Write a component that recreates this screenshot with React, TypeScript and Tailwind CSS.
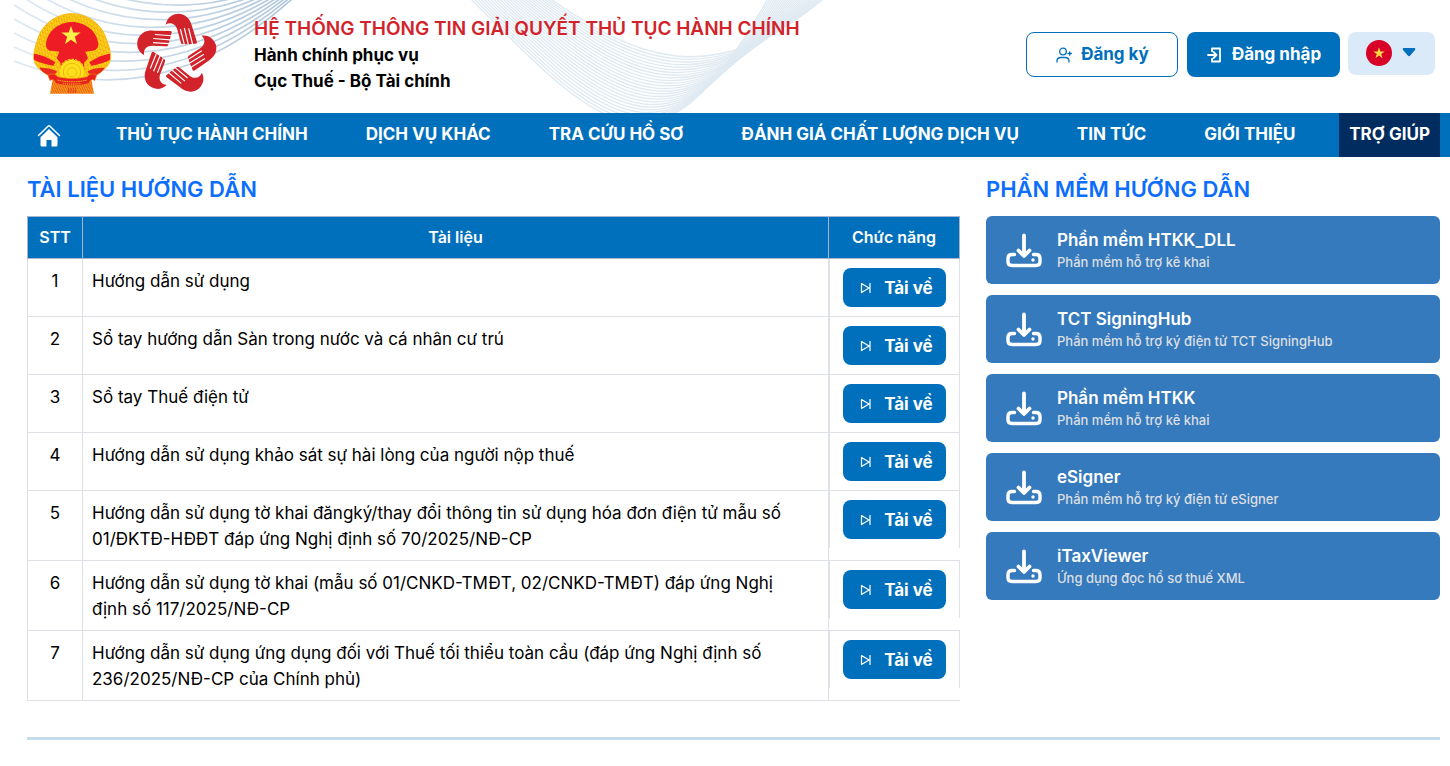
const navLinks = [
  "THỦ TỤC HÀNH CHÍNH",
  "DỊCH VỤ KHÁC",
  "TRA CỨU HỒ SƠ",
  "ĐÁNH GIÁ CHẤT LƯỢNG DỊCH VỤ",
  "TIN TỨC",
  "GIỚI THIỆU",
];

const documents = [
  "Hướng dẫn sử dụng",
  "Sổ tay hướng dẫn Sàn trong nước và cá nhân cư trú",
  "Sổ tay Thuế điện tử",
  "Hướng dẫn sử dụng khảo sát sự hài lòng của người nộp thuế",
  "Hướng dẫn sử dụng tờ khai đăngký/thay đổi thông tin sử dụng hóa đơn điện tử mẫu số 01/ĐKTĐ-HĐĐT đáp ứng Nghị định số 70/2025/NĐ-CP",
  "Hướng dẫn sử dụng tờ khai (mẫu số 01/CNKD-TMĐT, 02/CNKD-TMĐT) đáp ứng Nghị định số 117/2025/NĐ-CP",
  "Hướng dẫn sử dụng ứng dụng đối với Thuế tối thiểu toàn cầu (đáp ứng Nghị định số 236/2025/NĐ-CP của Chính phủ)",
];

const software = [
  { name: "Phần mềm HTKK_DLL", desc: "Phần mềm hỗ trợ kê khai" },
  { name: "TCT SigningHub", desc: "Phần mềm hỗ trợ ký điện tử TCT SigningHub" },
  { name: "Phần mềm HTKK", desc: "Phần mềm hỗ trợ kê khai" },
  { name: "eSigner", desc: "Phần mềm hỗ trợ ký điện tử eSigner" },
  { name: "iTaxViewer", desc: "Ứng dụng đọc hồ sơ thuế XML" },
];

// Left family of curves: fans out to the left, tightens towards the top right.
const leftWaves = Array.from(
  { length: 16 },
  (_, i) =>
    `M14 ${61 - 14 * i}C90 ${91 - 9 * i} 190 ${97 - 8 * i} ${304 - 2 * i} ${-12 - i}`
);

// Middle family: blends from the outer, deep curve to the inner, shallow one.
const middleWaves = Array.from({ length: 26 }, (_, i) => {
  const t = i / 25;
  const mix = (a: number, b: number) => (a + (b - a) * t).toFixed(1);
  return `M${mix(467, 545)} -5C${mix(610, 630)} ${mix(140, 55)} ${mix(660, 710)} ${mix(190, 97)} ${mix(770, 828)} -5`;
});

function HeaderWaves() {
  return (
    <svg width="860" height="113" viewBox="0 0 860 113" fill="none" className="absolute left-0 top-0" aria-hidden="true">
      <defs>
        <linearGradient id="waveFade" gradientUnits="userSpaceOnUse" x1="14" y1="0" x2="290" y2="0">
          <stop offset="0" stopColor="#dfe9f2" />
          <stop offset="1" stopColor="#b0c7dc" />
        </linearGradient>
      </defs>
      <g stroke="url(#waveFade)" strokeWidth="1.7">
        {leftWaves.map((d) => (
          <path key={d} d={d} />
        ))}
      </g>
      <g stroke="#cbdcea" strokeWidth="1.3" opacity="0.6">
        {middleWaves.map((d) => (
          <path key={d} d={d} />
        ))}
      </g>
    </svg>
  );
}

function Emblem() {
  return (
    <svg width="80" height="82" viewBox="36 10 240 246" role="img" aria-label="Quốc huy Việt Nam">
      <defs>
        <pattern id="grain" width="11" height="12" patternUnits="userSpaceOnUse" patternTransform="rotate(28)">
          <rect width="11" height="12" fill="#fbd414" />
          <path d="M1 2l4 3M7 7l3 3" stroke="#e86a16" strokeWidth="2.4" />
          <circle cx="8" cy="2" r="1.3" fill="#ee3a1c" />
        </pattern>
        <pattern id="tail" width="9" height="9" patternUnits="userSpaceOnUse" patternTransform="rotate(20)">
          <rect width="9" height="9" fill="#f59a17" />
          <path d="M0 0l9 9" stroke="#e93c1c" strokeWidth="2.5" />
        </pattern>
      </defs>
      <path d="M98 208L90 252L222 252L214 208Z" fill="url(#tail)" />
      <path d="M156 12C108 12 66 45 54 86C49 102 46 108 42 130C38 150 45 170 66 184L112 218H202L246 184C270 168 276 146 270 126C268 108 262 100 258 86C246 45 204 12 156 12Z" fill="url(#grain)" stroke="#f5bd16" strokeWidth="3" />
      <path d="M156 37C116 37 80 66 78 105C78 116 86 126 98 123L118 126L110 146L122 160L120 188H194L192 160L204 146L196 126L216 123C228 124 235 114 235 104C232 65 196 37 156 37Z" fill="#ee1c24" />
      <path d="M42 132C66 136 82 142 106 158L100 168C80 164 56 158 42 150ZM270 132C246 136 232 142 208 158L214 168C234 164 256 158 270 150Z" fill="#ee1c24" />
      <path d="M58 174C76 174 96 176 112 186L98 200C82 196 66 188 58 174ZM254 174C236 174 216 176 202 186L216 200C232 196 246 188 254 174Z" fill="#e92a1e" />
      <path d="M153 49L160 68.500H182L164.500 81.500L171 103L153 90.500L135 103L141.500 81.500L124 68.500H146Z" fill="#fff04a" />
      <circle cx="156" cy="187" r="37" fill="#ffe11a" />
      <circle cx="156" cy="187" r="38" fill="none" stroke="#f9c41a" strokeWidth="4" strokeDasharray="8 3" />
      <circle cx="156" cy="187" r="26" fill="none" stroke="#f3b31a" strokeWidth="3" />
      <circle cx="156" cy="188" r="14" fill="none" stroke="#f3b31a" strokeWidth="3" />
      <path d="M84 197C94 190 108 192 112 201C140 208 174 208 202 201C206 192 220 190 230 197L224 213C218 207 210 210 207 221C174 231 140 231 107 221C104 210 96 207 90 213Z" fill="#e8201e" stroke="#f58a18" strokeWidth="2" />
      <path d="M112 211C140 218 174 218 202 211" fill="none" stroke="#f8b41a" strokeWidth="3" strokeDasharray="5 2" />
      <path d="M130 221C146 224 168 224 184 221" fill="none" stroke="#f6a31a" strokeWidth="5" strokeDasharray="3 3" />
      <path d="M146 234V250M153 234V250M160 234V250M167 234V250" stroke="#e63a1c" strokeWidth="3" />
    </svg>
  );
}

function HandsLogo() {
  return (
    <svg width="80" height="82" viewBox="22 24 240 246" role="img" aria-label="Một cửa quốc gia">
      {[0, 72, 144, 216, 288].map((angle) => (
        <g key={angle} transform={`rotate(${angle} 139 149)`}>
          <path
            d="M108 59C113 34 132 26 148 26C170 28 182 43 187 64L202 112Q201 118 195 116L184 117L160 118Q154 118 153 111L143 74C138 56 122 50 108 59Z"
            fill="#d2232a"
          />
          <path d="M152 72L164 119M164 69L176 119M177 70L189 119" stroke="#fff" strokeWidth="3.500" />
        </g>
      ))}
    </svg>
  );
}

function DownloadIcon() {
  return (
    <svg width="38" height="36" viewBox="0 0 38 36" fill="none" stroke="#fff" strokeLinecap="round" strokeLinejoin="round" aria-hidden="true">
      <path d="M19 3.500V23M13.500 18.500L19 24L24.500 18.500" strokeWidth="3.800" />
      <path d="M9.500 22.500H7Q3 22.500 3 26.500V30Q3 33.500 7 33.500H31Q35 33.500 35 30V26.500Q35 22.500 31 22.500H28.500" strokeWidth="3.400" />
      <circle cx="28" cy="28" r="1.700" fill="#fff" stroke="none" />
    </svg>
  );
}

function Header() {
  return (
    <header className="relative flex h-[113px] items-start pl-8 pr-[15px]">
      <HeaderWaves />
      <div className="relative flex gap-[25px] pt-[13px]">
        <Emblem />
        <HandsLogo />
      </div>
      <div className="relative ml-[37px] pt-4 font-bold">
        <h1 className="text-[19px] leading-[26px] font-semibold text-[#d2232a]">HỆ THỐNG THÔNG TIN GIẢI QUYẾT THỦ TỤC HÀNH CHÍNH</h1>
        <p className="text-[17px] leading-[26px]">Hành chính phục vụ</p>
        <p className="text-[17px] leading-[26px]">Cục Thuế - Bộ Tài chính</p>
      </div>
      <div className="relative ml-auto flex items-start pt-8 text-[17px] font-bold">
        <button className="flex h-[45px] w-[152px] items-center justify-center gap-2 rounded-lg border border-[#0070bc] bg-white text-[#0070bc]">
          <svg width="18" height="18" viewBox="0 0 18 18" fill="none" stroke="currentColor" strokeWidth="1.300" strokeLinecap="round" aria-hidden="true">
            <circle cx="8" cy="5.500" r="3.300" />
            <path d="M2 16V15Q2 11.500 6 11.500H10Q14 11.500 14 15V16M13 7.500H16.400M14.700 5.800V9.200" />
          </svg>
          Đăng ký
        </button>
        <button className="ml-[9px] flex h-[45px] w-[153px] items-center justify-center gap-2 rounded-lg bg-[#0070bc] text-white">
          <svg width="18" height="18" viewBox="0 0 18 18" fill="none" stroke="currentColor" strokeWidth="1.800" strokeLinecap="round" strokeLinejoin="round" aria-hidden="true">
            <path d="M6 5V2.500H14V15.500H6V13M2 9H10M7.500 6L10.500 9L7.500 12" />
          </svg>
          Đăng nhập
        </button>
        <button aria-label="Ngôn ngữ" className="ml-2 flex h-[43px] w-[87px] items-center justify-center gap-[10px] rounded-lg bg-[#daeaf8] pr-[2px] pb-[2px]">
          <svg width="26" height="26" viewBox="0 0 26 26" aria-hidden="true">
            <circle cx="13" cy="13" r="13" fill="#d80027" />
            <path d="M13 7.200L14.400 11.400H18.800L15.200 14L16.600 18.200L13 15.600L9.400 18.200L10.800 14L7.200 11.400H11.600Z" fill="#ffda44" />
          </svg>
          <svg width="14" height="9" viewBox="0 0 14 9" aria-hidden="true">
            <path d="M1.500 0H12.500Q14 .5 13 2L8 7.800Q7 8.600 6 7.800L1 2Q0 .5 1.500 0Z" fill="#0070bc" />
          </svg>
        </button>
      </div>
    </header>
  );
}

function Nav() {
  return (
    <nav className="flex h-11 items-center bg-[#0070bc] pl-[37px] pr-[10px] text-[17px] font-bold whitespace-nowrap text-white">
      <a href="#" aria-label="Trang chủ" className="mr-[55px]">
        <svg width="24" height="24" viewBox="0 0 24 24" aria-hidden="true">
          <path d="M1.500 12.500L11 3.200Q12 2.300 13 3.200L22.500 12.500" fill="none" stroke="#fff" strokeWidth="1.500" strokeLinecap="round" />
          <path d="M12 6L20.500 14.200V22Q20.500 23.500 19 23.500H14.500V17H9.500V23.500H5Q3.500 23.500 3.500 22V14.200Z" fill="#fff" />
        </svg>
      </a>
      <div className="flex gap-[58px]">
        {navLinks.map((label) => (
          <a key={label} href="#">
            {label}
          </a>
        ))}
      </div>
      <a href="#" aria-current="page" className="ml-auto flex h-full items-center bg-[#002c5f] px-[10px]">
        TRỢ GIÚP
      </a>
    </nav>
  );
}

function DocumentTable() {
  return (
    <table className="w-full border-collapse text-[17px] leading-[26px]">
      <thead>
        <tr className="h-[42px] bg-[#0070bc] text-[16px] text-white">
          <th className="w-[55px] border border-[#a9b4cf] pb-[2px] font-semibold">STT</th>
          <th className="border border-[#a9b4cf] pb-[2px] font-semibold">Tài liệu</th>
          <th className="w-[131px] border border-[#a9b4cf] pb-[2px] font-semibold">Chức năng</th>
        </tr>
      </thead>
      <tbody>
        {documents.map((doc, i) => (
          <tr key={doc} className="align-top">
            <td className="border border-[#dee2e6] pt-[9px] pb-2 text-center">{i + 1}</td>
            <td className="border border-[#dee2e6] pt-[9px] pr-7 pb-2 pl-[9px]">{doc}</td>
            <td className="border-b border-[#dee2e6] p-0">
              <div className="flex h-[57px] justify-center border-x border-[#dee2e6] pt-[9px]">
                <button className="flex h-[39px] w-[103px] items-center justify-end gap-3 rounded-lg bg-[#0070bc] pr-[13px] text-[17px] font-bold text-white">
                  <svg width="12" height="12" viewBox="0 0 12 12" fill="none" stroke="currentColor" strokeWidth="1.200" strokeLinejoin="round" aria-hidden="true">
                    <path d="M1.500 1.500L9 6L1.500 10.500ZM10 1V11" />
                  </svg>
                  Tải về
                </button>
              </div>
            </td>
          </tr>
        ))}
      </tbody>
    </table>
  );
}

export default function App() {
  return (
    <div className="bg-white font-['Inter',sans-serif] text-black">
      <Header />
      <Nav />
      <main className="pl-[27px] pr-[10px]">
        <div className="grid grid-cols-[933fr_454fr] gap-[26px] pt-[17px]">
          <section>
            <h2 className="mb-3 text-[22px] leading-[30px] font-semibold text-[#0d6efd]">TÀI LIỆU HƯỚNG DẪN</h2>
            <DocumentTable />
          </section>
          <section>
            <h2 className="mb-3 text-[22px] leading-[30px] font-semibold text-[#0d6efd]">PHẦN MỀM HƯỚNG DẪN</h2>
            <div className="flex flex-col gap-[11px]">
              {software.map((item) => (
                <a key={item.name} href="#" className="flex h-[68px] items-center rounded-md bg-[#357abd] pl-[19px] font-medium text-white">
                  <DownloadIcon />
                  <span className="ml-[14px] flex flex-col">
                    <span className="text-[17px] leading-6 font-semibold">{item.name}</span>
                    <span className="text-[13px] leading-5 text-[#dcdfe3]">{item.desc}</span>
                  </span>
                </a>
              ))}
            </div>
          </section>
        </div>
        <hr className="mt-9 border-t-3 border-[#c3dceb]" />
      </main>
    </div>
  );
}
